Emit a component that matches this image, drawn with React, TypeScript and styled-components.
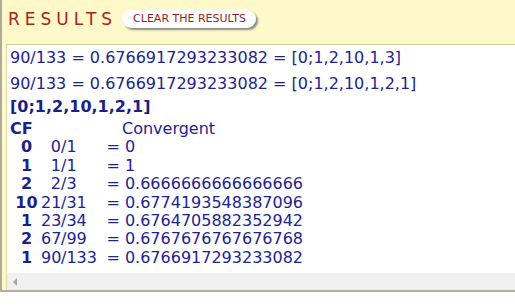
import React from "react";
import styled, { createGlobalStyle } from "styled-components";

const GlobalStyle = createGlobalStyle`
  html, body {
    margin: 0;
    padding: 0;
    background: #ffffff;
    overflow: hidden;
  }
`;

const Box = styled.div`
  background: #fff8c8;
  border-left: 2px solid #aeaaa0;
  border-bottom: 2px solid #b4ae9e;
  padding-left: 4px;
  font-family: "DejaVu Sans", Verdana, sans-serif;
`;

const Header = styled.div`
  display: flex;
  align-items: center;
  height: 44px;
  padding: 9px 0 0 2px;
  box-sizing: border-box;
  align-items: flex-start;
`;

const Title = styled.span`
  font-size: 17px;
  line-height: 20px;
  letter-spacing: 5px;
  color: #a3261c;
`;

const ClearButton = styled.button`
  margin: 1px 0 0 5px;
  height: 18px;
  padding: 0 10px 0 11px;
  border: none;
  border-radius: 9px;
  background: #ffffff;
  box-shadow: 2px 2px 2px #8a8a8a;
  font-family: "DejaVu Sans", Verdana, sans-serif;
  font-size: 11px;
  line-height: 18px;
  color: #9c1b1b;
  cursor: pointer;
`;

const Panel = styled.div`
  background: #ffffff;
  border-top: 1px solid #d8cf9c;
  border-left: 1px solid #e2d9a8;
`;

const Content = styled.div`
  padding: 0 0 6px 3px;
  color: #1e2390;
  font-size: 16px;
`;

const ResultLine = styled.div`
  line-height: 26px;
  white-space: nowrap;
`;

const CfLine = styled.div`
  line-height: 19px;
  font-weight: bold;
  color: #1c1f86;
`;

const Table = styled.div`
  margin-top: 4px;
  display: grid;
  grid-template-columns: 31px 20px auto 40px auto;
  justify-content: start;
  line-height: 18.4px;
  white-space: nowrap;
`;

const Th = styled.div<{ $span?: string; $pad?: number }>`
  grid-column: ${(p) => p.$span ?? "auto"};
  font-weight: ${(p) => (p.$span ? "normal" : "bold")};
  padding-left: ${(p) => p.$pad ?? 0}px;
  color: ${(p) => (p.$span ? "#1e2390" : "#1c1f86")};
`;

const Term = styled.div`
  font-weight: bold;
  text-align: center;
  padding-left: 2px;
  color: #1c1f86;
`;

const Num = styled.div<{ $align: "left" | "right" }>`
  text-align: ${(p) => p.$align};
`;

const Scrollbar = styled.div`
  display: flex;
  align-items: center;
  height: 17px;
  background: #f0f0f0;
  padding-left: 6px;
`;

const LeftArrow = styled.span`
  width: 0;
  height: 0;
  border-top: 4px solid transparent;
  border-bottom: 4px solid transparent;
  border-right: 4px solid #a6a6a6;
`;

const rows = [
  ["0", "0", "1", "0"],
  ["1", "1", "1", "1"],
  ["2", "2", "3", "0.6666666666666666"],
  ["10", "21", "31", "0.6774193548387096"],
  ["1", "23", "34", "0.6764705882352942"],
  ["2", "67", "99", "0.6767676767676768"],
  ["1", "90", "133", "0.6766917293233082"],
];

export default function App(): JSX.Element {
  return (
    <>
      <GlobalStyle />
      <Box>
        <Header>
          <Title>RESULTS</Title>
          <ClearButton>CLEAR THE RESULTS</ClearButton>
        </Header>
        <Panel>
          <Content>
            <ResultLine>90/133 = 0.6766917293233082 = [0;1,2,10,1,3]</ResultLine>
            <ResultLine>90/133 = 0.6766917293233082 = [0;1,2,10,1,2,1]</ResultLine>
            <CfLine>[0;1,2,10,1,2,1]</CfLine>
            <Table>
              <Th>CF</Th>
              <Th $span="2 / -1" $pad={81}>
                Convergent
              </Th>
              {rows.map(([cf, n, d, v], i) => (
                <React.Fragment key={i}>
                  <Term>{cf}</Term>
                  <Num $align="right">{n}</Num>
                  <span>/</span>
                  <Num $align="left">{d}</Num>
                  <span>= {v}</span>
                </React.Fragment>
              ))}
            </Table>
          </Content>
          <Scrollbar>
            <LeftArrow />
          </Scrollbar>
        </Panel>
      </Box>
    </>
  );
}
